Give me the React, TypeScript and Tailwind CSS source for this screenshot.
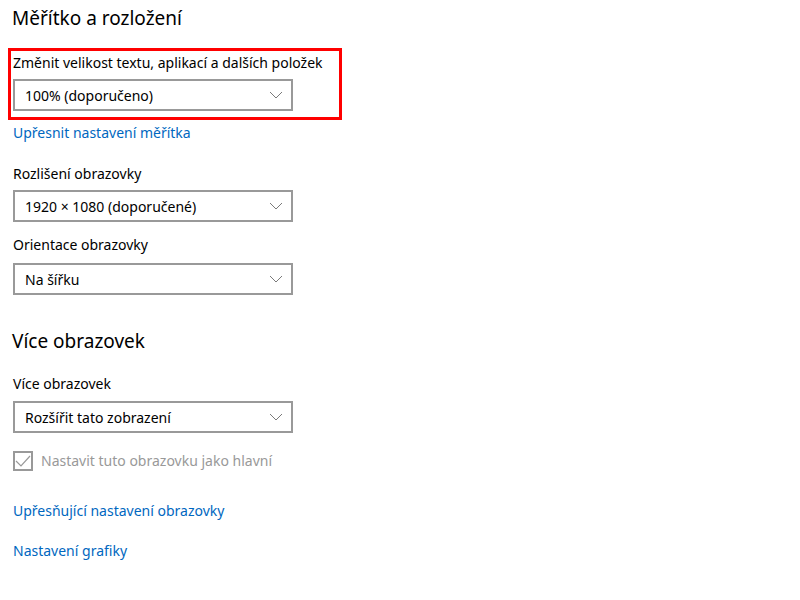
import React from "react";

const font = { fontFamily: '"Noto Sans", "Open Sans", sans-serif' };

function Chevron() {
  return (
    <svg width="14" height="8" viewBox="0 0 14 8" className="shrink-0">
      <path d="M1 1 L7 7 L13 1" fill="none" stroke="#7a7a7a" strokeWidth="1" />
    </svg>
  );
}

function Select({ value }: { value: string }) {
  return (
    <div className="flex h-[32px] w-[280px] items-center justify-between border-2 border-[#999] bg-white pl-[10px] pr-[8px] text-[14px] text-black">
      <span className="whitespace-nowrap">{value}</span>
      <Chevron />
    </div>
  );
}

function Label({ children }: { children: React.ReactNode }) {
  return <div className="whitespace-nowrap text-[14px] leading-[20px] text-black">{children}</div>;
}

function LinkText({ children }: { children: React.ReactNode }) {
  return <div className="whitespace-nowrap text-[14px] leading-[20px] text-[#0067c0]">{children}</div>;
}

export default function App() {
  return (
    <div className="min-h-screen w-[800px] bg-white" style={font}>
      <div className="flex flex-col pl-[13px] pt-[4px]">
        <h1 className="ml-[-1px] text-[19px] leading-[28px] text-black">Měřítko a rozložení</h1>

        <div className="ml-[-5px] mt-[16px] w-[334px] border-[3px] border-[#ff0000] pb-[6px] pl-[2px] pt-[2px]">
          <Label>Změnit velikost textu, aplikací a dalších položek</Label>
          <div className="mt-[6px]">
            <Select value="100% (doporučeno)" />
          </div>
        </div>

        <div className="mt-[3px]">
          <LinkText>Upřesnit nastavení měřítka</LinkText>
        </div>

        <div className="mt-[21px]">
          <Label>Rozlišení obrazovky</Label>
        </div>
        <div className="mt-[6px]">
          <Select value="1920 × 1080 (doporučené)" />
        </div>

        <div className="mt-[13px]">
          <Label>Orientace obrazovky</Label>
        </div>
        <div className="mt-[8px]">
          <Select value="Na šířku" />
        </div>

        <h2 className="ml-[-1px] mt-[32px] text-[19px] leading-[28px] text-black">Více obrazovek</h2>

        <div className="mt-[19px]">
          <Label>Více obrazovek</Label>
        </div>
        <div className="mt-[7px]">
          <Select value="Rozšířit tato zobrazení" />
        </div>

        <div className="mt-[18px] flex items-center gap-[8px]">
          <div className="flex h-[20px] w-[20px] items-center justify-center border-2 border-[#999]">
            <svg width="16" height="16" viewBox="0 0 16 16">
              <path d="M1 8 L6 13 L15 3" fill="none" stroke="#999" strokeWidth="1.2" />
            </svg>
          </div>
          <span className="whitespace-nowrap text-[14px] leading-[20px] text-[#999]">Nastavit tuto obrazovku jako hlavní</span>
        </div>

        <div className="mt-[30px]">
          <LinkText>Upřesňující nastavení obrazovky</LinkText>
        </div>
        <div className="mt-[20px]">
          <LinkText>Nastavení grafiky</LinkText>
        </div>
      </div>
    </div>
  );
}
